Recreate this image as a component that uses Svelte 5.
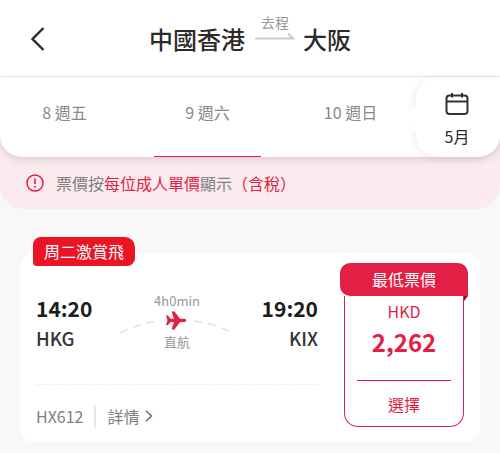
<script>
  const days = [
    { label: "8 週五", active: false },
    { label: "9 週六", active: true },
    { label: "10 週日", active: false }
  ];
</script>

<div class="page">
  <header class="header">
    <svg class="back" width="18" height="28" viewBox="0 0 18 28">
      <path d="M14.5 3 L3.5 14 L14.5 25" fill="none" stroke="#2b2b2b" stroke-width="2.4" />
    </svg>
    <div class="route">
      <span>中國香港</span>
      <div class="direction">
        <small>去程</small>
        <svg width="40" height="8" viewBox="0 0 40 8">
          <path d="M0 6.5 H38 L33 1.5" fill="none" stroke="#cbcbcb" stroke-width="2" />
        </svg>
      </div>
      <span class="dest">大阪</span>
    </div>
  </header>

  <section class="top">
    <div class="datebar">
      <div class="days">
        {#each days as day}
          <div class="day" class:active={day.active}>{day.label}</div>
        {/each}
      </div>
      <div class="calendar">
        <svg width="26" height="26" viewBox="0 0 26 26">
          <rect x="2.5" y="4.5" width="21" height="18.5" rx="3" fill="none" stroke="#333" stroke-width="2" />
          <path d="M2.5 10.5 H23.5 M8 2 V6.5 M18 2 V6.5" fill="none" stroke="#333" stroke-width="2" />
        </svg>
        <span>5月</span>
      </div>
    </div>
    <div class="notice">
      <svg width="20" height="20" viewBox="0 0 20 20">
        <circle cx="10" cy="10" r="8" fill="none" stroke="#e21f45" stroke-width="1.5" />
        <path d="M10 5.5 V11 M10 13 V14.6" fill="none" stroke="#e21f45" stroke-width="1.6" />
      </svg>
      <p>票價按<em>每位成人單價</em>顯示<em>（含稅）</em></p>
    </div>
  </section>

  <main class="list">
    <article class="card">
      <div class="badge">周二激賞飛</div>
      <div class="info">
        <div class="flight">
          <div class="point">
            <strong>14:20</strong>
            <span>HKG</span>
          </div>
          <div class="path">
            <small>4h0min</small>
            <svg width="114" height="24" viewBox="0 0 114 24">
              <path d="M0 22 Q20 12 38 10 M74 10 Q94 12 112 22" fill="none" stroke="#efd9c4" stroke-width="1.3" stroke-dasharray="8 6" />
              <path d="M51.5 0.5 L54.5 0.5 L60 7.7 L65 7.7 Q67.5 9.3 65 11 L60 11 L54.5 18.5 L51.5 18.5 L54 11 L50.5 11 L48 14 L46 14 L47.5 9.3 L46 4.5 L48 4.5 L50.5 7.7 L54 7.7 Z" fill="#e21f45" />
            </svg>
            <small class="direct">直航</small>
          </div>
          <div class="point end">
            <strong>19:20</strong>
            <span>KIX</span>
          </div>
        </div>
        <div class="footer">
          <span class="code">HX612</span>
          <span class="details">詳情</span>
          <svg width="8" height="12" viewBox="0 0 8 12">
            <path d="M1 0.8 L6.5 6 L1 11.2" fill="none" stroke="#666" stroke-width="1.4" />
          </svg>
        </div>
      </div>
      <div class="price">
        <div class="price-title">最低票價</div>
        <div class="price-body">
          <span class="currency">HKD</span>
          <strong>2,262</strong>
          <span class="select">選擇</span>
        </div>
      </div>
    </article>
  </main>
</div>

<style>
  :global(body) {
    background: #f8f8f8;
  }

  .page {
    height: 453px;
    overflow: hidden;
    font-family: "Noto Sans CJK TC", "Noto Sans", sans-serif;
    background: #f8f8f8;
  }

  .header {
    height: 77px;
    box-sizing: border-box;
    border-bottom: 1px solid #e8e8e8;
    background: #fff;
    display: flex;
    align-items: center;
    padding: 1px 0 0 29px;
  }

  .route {
    display: flex;
    align-items: center;
    gap: 10px;
    margin-left: 102px;
    font-size: 24px;
    font-weight: 500;
    color: #2b2b2b;
    line-height: 32px;
  }

  .dest {
    margin-left: -2px;
  }

  .direction {
    display: flex;
    flex-direction: column;
    align-items: center;
    margin-bottom: 24px;
  }

  .direction small {
    font-size: 14px;
    font-weight: 400;
    color: #999;
    line-height: 18px;
  }

  .direction svg {
    display: block;
    margin-top: 1px;
  }

  .top {
    background: #fbeaee;
    border-radius: 0 0 24px 24px;
  }

  .datebar {
    height: 80px;
    background: #fff;
    border-radius: 0 0 22px 22px;
    box-shadow: 0 3px 8px rgba(0, 0, 0, 0.12);
    display: flex;
    position: relative;
  }

  .days {
    flex: 1;
    min-width: 0;
    display: flex;
    margin-left: -7px;
  }

  .day {
    width: 143px;
    flex: none;
    height: 80px;
    box-sizing: border-box;
    padding-top: 23px;
    text-align: center;
    font-size: 16px;
    line-height: 24px;
    color: #888;
    position: relative;
  }

  .day.active::after {
    content: "";
    position: absolute;
    left: 18px;
    right: 18px;
    bottom: 0;
    height: 1.5px;
    background: #e21f45;
  }

  .calendar {
    width: 84px;
    flex: none;
    background: #fff;
    border-radius: 22px 0 22px 22px;
    box-shadow: -3px 1px 6px rgba(0, 0, 0, 0.06);
    display: flex;
    flex-direction: column;
    align-items: center;
    padding-top: 14px;
    box-sizing: border-box;
    position: relative;
    font-size: 16px;
    color: #2b2b2b;
  }

  .calendar::before {
    content: "";
    position: absolute;
    left: -9.5px;
    top: 31.5px;
    width: 19px;
    height: 19px;
    background: #fff;
    transform: rotate(45deg);
  }

  .calendar svg {
    position: relative;
    margin-right: 3px;
  }

  .calendar span {
    position: relative;
    line-height: 20px;
    margin-top: 9px;
    margin-right: 2px;
  }

  .notice {
    height: 52px;
    display: flex;
    align-items: center;
    gap: 11px;
    padding-left: 25px;
    box-sizing: border-box;
  }

  .notice p {
    margin: 0;
    font-size: 16px;
    color: #808080;
  }

  .notice em {
    font-style: normal;
    color: #e21f45;
  }

  .list {
    padding: 44px 20px 10px;
  }

  .card {
    position: relative;
    height: 189px;
    background: #fff;
    border-radius: 14px;
    display: flex;
  }

  .badge {
    position: absolute;
    left: 13px;
    top: -16px;
    width: 102px;
    height: 29px;
    background: #ec1424;
    border-radius: 8px 10px 8px 4px;
    color: #fff;
    font-size: 16px;
    line-height: 29px;
    text-align: center;
  }

  .info {
    width: 282px;
    margin-left: 16px;
    flex: none;
    display: flex;
    flex-direction: column;
  }

  .flight {
    height: 132px;
    box-sizing: border-box;
    padding-top: 39px;
    border-bottom: 1.5px dashed #ececec;
    display: flex;
    justify-content: space-between;
  }

  .point {
    display: flex;
    flex-direction: column;
  }

  .point.end {
    align-items: flex-end;
  }

  .point strong {
    font-size: 21px;
    font-weight: 600;
    line-height: 32px;
    color: #1c1c1c;
  }

  .point span {
    font-size: 18.5px;
    font-weight: 500;
    line-height: 28px;
    color: #333;
    margin-top: 0;
  }

  .path {
    display: flex;
    flex-direction: column;
    align-items: center;
  }

  .path small {
    font-size: 13px;
    color: #999;
    line-height: 18px;
  }

  .path svg {
    display: block;
    margin-top: 1px;
  }

  .path .direct {
    margin-top: -2px;
  }

  .footer {
    display: flex;
    align-items: center;
    flex: 1;
    font-size: 16px;
    color: #808080;
    padding-top: 5px;
  }

  .code {
    padding-right: 11px;
  }

  .details {
    border-left: 2px solid #e8e8e8;
    padding-left: 11px;
    margin-right: 6px;
    line-height: 23px;
  }

  .price {
    margin-left: 22px;
    margin-top: 10px;
    width: 128px;
    flex: none;
    position: relative;
  }

  .price-title {
    height: 33px;
    background: #e21f45;
    border-radius: 10px 10px 0 10px;
    color: #fff;
    font-size: 16px;
    line-height: 33px;
    text-align: center;
    position: relative;
  }

  .price-title::after {
    content: "";
    position: absolute;
    right: 0;
    bottom: -5px;
    border-top: 5px solid #8a0f2a;
    border-right: 4px solid transparent;
  }

  .price-body {
    margin: 0 4px;
    height: 131px;
    box-sizing: border-box;
    border: 1px solid #e21f45;
    border-top: 0;
    border-radius: 0 0 14px 14px;
    display: flex;
    flex-direction: column;
    align-items: center;
    color: #e21f45;
  }

  .currency {
    font-size: 16px;
    line-height: 20px;
    margin-top: 5px;
  }

  .price-body strong {
    font-size: 24px;
    font-weight: 600;
    line-height: 36px;
    margin-top: 3px;
  }

  .select {
    width: 94px;
    margin-top: 20px;
    border-top: 1px solid #e21f45;
    text-align: center;
    font-size: 16px;
    line-height: 24px;
    padding-top: 11px;
  }
</style>
